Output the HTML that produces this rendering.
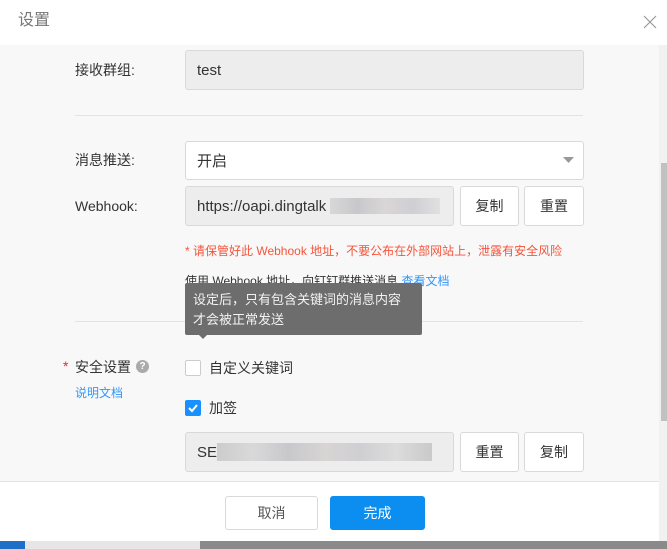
<!DOCTYPE html>
<html><head><meta charset="utf-8"><style>
*{box-sizing:border-box;margin:0;padding:0}
body{width:667px;height:549px;overflow:hidden;position:relative;background:#f8f8f8;font-family:"Liberation Sans","Noto Sans CJK SC",sans-serif;font-size:14px;color:#333}
.a{position:absolute}
.inp{position:absolute;border:1px solid #d9d9d9;border-radius:3px;padding-left:11px;display:flex;align-items:center;font-size:15px;color:#333}
.btn{position:absolute;border:1px solid #d9d9d9;border-radius:3px;background:#fff;display:flex;align-items:center;justify-content:center;font-size:14px;color:#333}
.lbl{position:absolute;font-size:14px;color:#333;line-height:20px}
</style></head><body>
<div class="a" style="left:0;top:0;width:667px;height:45px;background:#fff"></div>
<div class="a" style="left:18px;top:10px;font-size:16px;color:#777;line-height:22px">设置</div>
<svg class="a" style="left:643px;top:15px" width="14" height="14"><path d="M1 1L13 13M13 1L1 13" stroke="#999" stroke-width="1.2"/></svg>

<div class="lbl" style="left:75px;top:60px">接收群组:</div>
<div class="inp" style="left:185px;top:50px;width:399px;height:40px;background:#ededed">test</div>
<div class="a" style="left:75px;top:115px;width:508px;height:1px;background:#e3e3e3"></div>

<div class="lbl" style="left:75px;top:150px">消息推送:</div>
<div class="inp" style="left:185px;top:141px;width:399px;height:39px;background:#fff">开启</div>
<svg class="a" style="left:563px;top:157px" width="11" height="7"><path d="M0 0H11L5.5 6Z" fill="#999"/></svg>

<div class="lbl" style="left:75px;top:196px">Webhook:</div>
<div class="inp" style="left:185px;top:186px;width:269px;height:40px;background:#ededed;overflow:hidden">https://oapi.dingtalk<span style="display:inline-block;width:110px;height:16px;margin-left:4px;background:linear-gradient(90deg,#d8d8d8,#c8c8cc,#d9d6d6,#cfcfd3,#e0e0e0)"></span></div>
<div class="btn" style="left:460px;top:186px;width:59px;height:40px">复制</div>
<div class="btn" style="left:524px;top:186px;width:60px;height:40px">重置</div>

<div class="a" style="left:185px;top:243px;font-size:12px;color:#f5543a;line-height:16px">* 请保管好此 Webhook 地址，不要公布在外部网站上，泄露有安全风险</div>
<div class="a" style="left:185px;top:273px;font-size:12px;color:#333;line-height:16px">使用 Webhook 地址，向钉钉群推送消息 <span style="color:#3296fa">查看文档</span></div>
<div class="a" style="left:75px;top:321px;width:508px;height:1px;background:#e3e3e3"></div>
<div class="a" style="left:185px;top:283px;width:237px;height:52px;background:#6d6d6d;border-radius:2px;color:#f2f2f2;font-size:13px;line-height:20px;padding:7px 0 0 8px">设定后，只有包含关键词的消息内容<br>才会被正常发送</div>
<div class="a" style="left:199px;top:335px;width:0;height:0;border-left:4px solid transparent;border-right:4px solid transparent;border-top:4px solid #6d6d6d"></div>

<div class="a" style="left:63px;top:358px;color:#f5222d;font-size:14px">*</div>
<div class="lbl" style="left:75px;top:357px">安全设置</div>
<div class="a" style="left:136px;top:360px;width:13px;height:13px;border-radius:50%;background:#aaa;color:#fff;font-size:10px;font-weight:bold;text-align:center;line-height:13px">?</div>
<div class="a" style="left:75px;top:385px;font-size:12px;color:#3296fa;line-height:16px">说明文档</div>

<div class="a" style="left:185px;top:360px;width:16px;height:16px;border:1px solid #ccc;border-radius:2px;background:#fff"></div>
<div class="lbl" style="left:209px;top:358px">自定义关键词</div>
<div class="a" style="left:185px;top:400px;width:16px;height:16px;border-radius:2px;background:#1890ff"></div>
<svg class="a" style="left:185px;top:400px" width="16" height="16"><path d="M4 8L7 11L12 5" stroke="#fff" stroke-width="2" fill="none"/></svg>
<div class="lbl" style="left:209px;top:398px">加签</div>

<div class="inp" style="left:185px;top:432px;width:269px;height:40px;background:#ededed;overflow:hidden">SE<span style="display:inline-block;width:215px;height:18px;background:linear-gradient(90deg,#ccc,#d9d9d9,#c8c8cc,#d8d4d4,#cfcfd3,#dcdcdc,#c9c9c9)"></span></div>
<div class="btn" style="left:460px;top:432px;width:59px;height:40px">重置</div>
<div class="btn" style="left:524px;top:432px;width:60px;height:40px">复制</div>

<div class="a" style="left:0;top:481px;width:659px;height:60px;background:#fff;border-top:1px solid #e3e3e3"></div>
<div class="btn" style="left:225px;top:496px;width:93px;height:34px;color:#555">取消</div>
<div class="btn" style="left:330px;top:496px;width:95px;height:34px;background:#0b8eef;border-color:#0b8eef;color:#fff">完成</div>

<div class="a" style="left:659px;top:45px;width:8px;height:496px;background:#f1f1f1"></div>
<div class="a" style="left:661px;top:163px;width:6px;height:258px;background:#c1c1c1"></div>

<div class="a" style="left:0;top:541px;width:667px;height:8px;background:#8a8a8a"></div>
<div class="a" style="left:0;top:541px;width:25px;height:8px;background:#1e6fc8"></div>
<div class="a" style="left:25px;top:541px;width:175px;height:8px;background:#e6e6e6"></div>
</body></html>
